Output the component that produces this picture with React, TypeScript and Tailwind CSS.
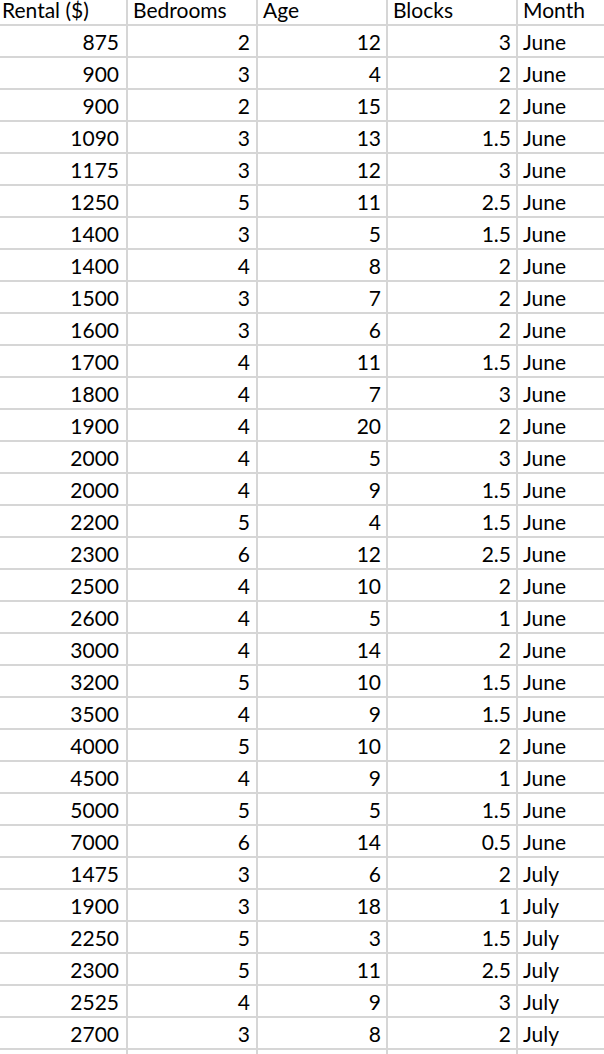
import React from "react";

const rows: [string, string, string, string, string][] = [
  ["875", "2", "12", "3", "June"],
  ["900", "3", "4", "2", "June"],
  ["900", "2", "15", "2", "June"],
  ["1090", "3", "13", "1.5", "June"],
  ["1175", "3", "12", "3", "June"],
  ["1250", "5", "11", "2.5", "June"],
  ["1400", "3", "5", "1.5", "June"],
  ["1400", "4", "8", "2", "June"],
  ["1500", "3", "7", "2", "June"],
  ["1600", "3", "6", "2", "June"],
  ["1700", "4", "11", "1.5", "June"],
  ["1800", "4", "7", "3", "June"],
  ["1900", "4", "20", "2", "June"],
  ["2000", "4", "5", "3", "June"],
  ["2000", "4", "9", "1.5", "June"],
  ["2200", "5", "4", "1.5", "June"],
  ["2300", "6", "12", "2.5", "June"],
  ["2500", "4", "10", "2", "June"],
  ["2600", "4", "5", "1", "June"],
  ["3000", "4", "14", "2", "June"],
  ["3200", "5", "10", "1.5", "June"],
  ["3500", "4", "9", "1.5", "June"],
  ["4000", "5", "10", "2", "June"],
  ["4500", "4", "9", "1", "June"],
  ["5000", "5", "5", "1.5", "June"],
  ["7000", "6", "14", "0.5", "June"],
  ["1475", "3", "6", "2", "July"],
  ["1900", "3", "18", "1", "July"],
  ["2250", "5", "3", "1.5", "July"],
  ["2300", "5", "11", "2.5", "July"],
  ["2525", "4", "9", "3", "July"],
  ["2700", "3", "8", "2", "July"],
];

const cellBase = "bg-white flex items-end leading-[20px] pb-[4px] whitespace-nowrap";

export default function App() {
  return (
    <div
      className="w-[604px] h-[1054px] overflow-hidden bg-white text-black text-[21px]"
      style={{ fontFamily: "Lato, 'Open Sans', sans-serif" }}
    >
      <div className="grid grid-cols-[126px_128px_128px_128px_1fr] gap-[2px] bg-[#d6d6d6] pb-[2px]">
        <div className={`${cellBase} h-[24px] pl-[2px]`}>Rental ($)</div>
        <div className={`${cellBase} h-[24px] pl-[5px]`}>Bedrooms</div>
        <div className={`${cellBase} h-[24px] pl-[5px]`}>Age</div>
        <div className={`${cellBase} h-[24px] pl-[5px]`}>Blocks</div>
        <div className={`${cellBase} h-[24px] pl-[5px]`}>Month</div>
        {rows.map((r, i) => (
          <React.Fragment key={i}>
            <div className={`${cellBase} h-[30px] justify-end pr-[7px]`}>{r[0]}</div>
            <div className={`${cellBase} h-[30px] justify-end pr-[6px]`}>{r[1]}</div>
            <div className={`${cellBase} h-[30px] justify-end pr-[5px]`}>{r[2]}</div>
            <div className={`${cellBase} h-[30px] justify-end pr-[5px]`}>{r[3]}</div>
            <div className={`${cellBase} h-[30px] pl-[5px]`}>{r[4]}</div>
          </React.Fragment>
        ))}
        <div className={`${cellBase} h-[30px]`} />
        <div className={`${cellBase} h-[30px]`} />
        <div className={`${cellBase} h-[30px]`} />
        <div className={`${cellBase} h-[30px]`} />
        <div className={`${cellBase} h-[30px]`} />
      </div>
    </div>
  );
}
